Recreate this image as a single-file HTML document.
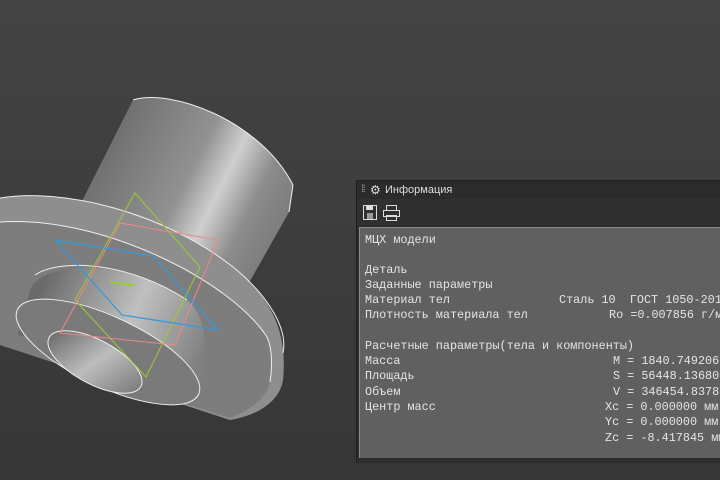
<!DOCTYPE html>
<html><head><meta charset="utf-8"><style>
body{margin:0;width:720px;height:480px;overflow:hidden;background:#3c3c3c;position:relative;font-family:"Liberation Sans","DejaVu Sans",sans-serif}
#bg{position:absolute;left:0;top:0;width:720px;height:480px;background:linear-gradient(#444 0%,#3d3d3d 50%,#363636 100%)}
#panel{position:absolute;left:356px;top:180px;width:364px;height:282px;background:#2c2c2c;border-left:1px solid #1e1e1e;border-top:1px solid #1e1e1e}
#title{position:absolute;left:0;top:0;width:364px;height:18px;background:#2b2b2b;color:#ddd;font-size:11px;line-height:18px}
#tb{position:absolute;left:0;top:18px;width:364px;height:26px;background:#303030}
#content{position:absolute;left:2px;top:46px;width:362px;height:230px;background:#606060;border-top:1px solid #8a8a8a;border-left:1px solid #8a8a8a;overflow:hidden;font-family:"Liberation Mono","DejaVu Sans Mono",monospace;font-size:11.8px;color:#e4e4e4}
.l{position:absolute;left:5px;white-space:pre}
.r{position:absolute;white-space:pre}
#scroll{position:absolute;left:1px;top:274px;width:211px;height:3px;background:#e8e8e8}
</style></head><body>
<div id="bg"></div>
<svg width="720" height="480" style="position:absolute;left:0;top:0">
<defs>
<linearGradient id="cyl" gradientUnits="userSpaceOnUse" x1="100" y1="150" x2="280" y2="240">
<stop offset="0" stop-color="#6e6e6e"/><stop offset="0.45" stop-color="#929292"/><stop offset="0.62" stop-color="#cfcfcf"/><stop offset="0.8" stop-color="#8c8c8c"/><stop offset="1" stop-color="#7a7a7a"/></linearGradient>
<linearGradient id="fl" gradientUnits="userSpaceOnUse" x1="0" y1="220" x2="290" y2="380">
<stop offset="0" stop-color="#7a7a7a"/><stop offset="0.6" stop-color="#9a9a9a"/><stop offset="1" stop-color="#8a8a8a"/></linearGradient>
<linearGradient id="hub" gradientUnits="userSpaceOnUse" x1="40" y1="290" x2="200" y2="360">
<stop offset="0" stop-color="#6a6a6a"/><stop offset="0.55" stop-color="#c0c0c0"/><stop offset="1" stop-color="#808080"/></linearGradient>
<linearGradient id="hole" gradientUnits="userSpaceOnUse" x1="50" y1="340" x2="140" y2="385">
<stop offset="0" stop-color="#6a6a6a"/><stop offset="0.5" stop-color="#bdbdbd"/><stop offset="1" stop-color="#7a7a7a"/></linearGradient>
</defs>
<!-- top cylinder -->
<path d="M133,100 C170,88 260,120 293,185 L289,212 L245,290 L75,215 Z" fill="url(#cyl)"/>
<path d="M133,100 C170,88 260,120 293,185 L289,212" fill="none" stroke="#eee"/>
<!-- flange -->
<path d="M0,198 C60,188 160,210 233,267 C270,297 288,330 283,380 C280,400 260,415 230,420 L0,345 Z" fill="#8e8e8e"/>
<path d="M0,222 C100,215 230,280 267,337 C273,350 272,370 270,382 C265,400 250,410 230,418 L0,345 Z" fill="#7d7d7d"/>
<path d="M0,198 C60,188 160,210 233,267 C270,297 288,330 283,353" fill="none" stroke="#eee"/>
<path d="M0,222 C100,215 230,280 267,337 C273,350 272,370 270,382" fill="none" stroke="#eee"/>
<!-- hub -->
<path d="M30,290 C40,262 120,255 187,300 C200,310 205,330 205,345 L205,378 L18,335 Z" fill="url(#hub)"/>
<path d="M35,275 C60,258 130,262 187,300" fill="none" stroke="#eee"/>
<ellipse cx="108" cy="352" rx="100" ry="35" transform="rotate(25 108 352)" fill="#7a7a7a" stroke="#eee"/>
<ellipse cx="95" cy="362" rx="52" ry="22" transform="rotate(28 95 362)" fill="url(#hole)" stroke="#eee"/>
<!-- planes -->
<polygon points="135,193 200,267 146,377 75,300" fill="none" stroke="#9c3" stroke-width="1"/>
<polygon points="120,223 218,240 175,345 60,333" fill="none" stroke="#e88" stroke-width="1"/>
<polygon points="55,240 153,256 218,330 122,315" fill="none" stroke="#39d" stroke-width="1.2"/>
<line x1="110" y1="282" x2="135" y2="285" stroke="#9c3" stroke-width="2"/>
</svg>
<div id="panel">
<div id="title"><span style="position:absolute;left:4px;top:0;color:#aaa;font-size:10px;letter-spacing:-1px">⁞⁞</span><span style="position:absolute;left:13px;top:0;font-size:12px">⚙</span><span style="position:absolute;left:28px">Информация</span></div>
<div id="tb">
<svg width="50" height="26" style="position:absolute;left:3px;top:2px">
<rect x="3.5" y="4.5" width="13" height="14" fill="none" stroke="#ddd"/><rect x="6" y="5" width="7" height="4" fill="#ddd"/><rect x="7" y="12" width="6" height="6" fill="#999"/>
<rect x="26.5" y="4.5" width="10" height="5" fill="none" stroke="#ddd"/><rect x="23.5" y="9.5" width="16" height="6" fill="none" stroke="#ddd"/><rect x="26.5" y="14.5" width="10" height="5" fill="none" stroke="#ddd"/>
</svg>
</div>
<div id="content">
<div class="l" style="top:5px">МЦХ модели</div>
<div class="l" style="top:35px">Деталь</div>
<div class="l" style="top:50px">Заданные параметры</div>
<div class="l" style="top:65px">Материал тел</div><div class="r" style="top:65px;left:199px">Сталь 10  ГОСТ 1050-2013</div>
<div class="l" style="top:80px">Плотность материала тел</div><div class="r" style="top:80px;left:249px">Ro =0.007856 г/мм3</div>
<div class="l" style="top:111px">Расчетные параметры(тела и компоненты)</div>
<div class="l" style="top:126px">Масса</div><div class="r" style="top:126px;left:253px">M = 1840.749206 г</div>
<div class="l" style="top:141px">Площадь</div><div class="r" style="top:141px;left:253px">S = 56448.136800 мм2</div>
<div class="l" style="top:157px">Объем</div><div class="r" style="top:157px;left:253px">V = 346454.837800 мм3</div>
<div class="l" style="top:172px">Центр масс</div><div class="r" style="top:172px;left:245px">Xc = 0.000000 мм</div>
<div class="r" style="top:187px;left:245px">Yc = 0.000000 мм</div>
<div class="r" style="top:203px;left:245px">Zc = -8.417845 мм</div>
<div id="scroll"></div>
</div>
</div>
</body></html>
